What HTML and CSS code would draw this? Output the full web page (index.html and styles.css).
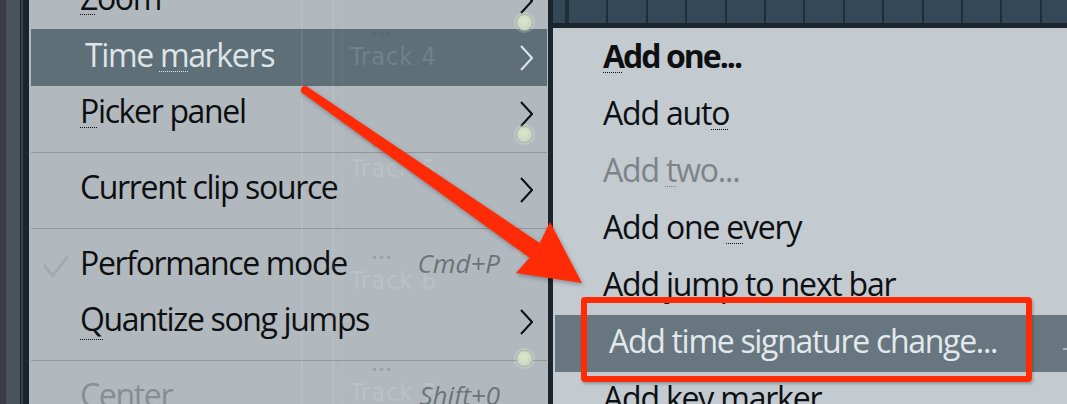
FILE: index.html
```html
<!DOCTYPE html>
<html lang="en">
<head>
    <meta charset="UTF-8">
    <meta name="viewport" content="width=device-width, initial-scale=1.0">
    <title>Time markers menu</title>
    <link rel="stylesheet" href="styles.css">
</head>
<body>
    <div class="screen">
        <div class="rail"></div>

        <div class="playlist">
            <!-- context menu -->
            <div class="menu">
                <div class="item">
                    <span class="check"></span>
                    <span class="label"><span class="acc">Z</span>oom</span>
                    <span class="sub"><svg class="chev" viewBox="0 0 13 26"><polyline points="1,1 12,13 1,25"/></svg></span>
                </div>
                <div class="item active">
                    <span class="check"></span>
                    <span class="label">Time <span class="acc">m</span>arkers</span>
                    <span class="sub"><svg class="chev" viewBox="0 0 13 26"><polyline points="1,1 12,13 1,25"/></svg></span>
                </div>
                <div class="item">
                    <span class="check"></span>
                    <span class="label"><span class="acc">P</span>icker panel</span>
                    <span class="sub"><svg class="chev" viewBox="0 0 13 26"><polyline points="1,1 12,13 1,25"/></svg></span>
                </div>
                <div class="sep"></div>
                <div class="item">
                    <span class="check"></span>
                    <span class="label">Current clip source</span>
                    <span class="sub"><svg class="chev" viewBox="0 0 13 26"><polyline points="1,1 12,13 1,25"/></svg></span>
                </div>
                <div class="sep"></div>
                <div class="item">
                    <span class="check"><svg class="tick" viewBox="0 0 26 25"><polyline points="1,11 9.5,22 25,2"/></svg></span>
                    <span class="label">Performance mode</span>
                    <span class="keys">Cmd+P</span>
                    <span class="sub"></span>
                </div>
                <div class="item">
                    <span class="check"></span>
                    <span class="label"><span class="acc acc-low">Q</span>uantize song jumps</span>
                    <span class="sub"><svg class="chev" viewBox="0 0 13 26"><polyline points="1,1 12,13 1,25"/></svg></span>
                </div>
                <div class="sep"></div>
                <div class="item disabled">
                    <span class="check"></span>
                    <span class="label">Center</span>
                    <span class="keys">Shift+0</span>
                    <span class="sub"></span>
                </div>
            </div>

            <!-- playlist track headers seen behind the menu -->
            <div class="tracks">
                <div class="track"><span class="led"></span><span class="grip"><i></i><i></i><i></i></span><span class="track-name">Track 3</span></div>
                <div class="track"><span class="led"></span><span class="grip"><i></i><i></i><i></i></span><span class="track-name">Track 4</span></div>
                <div class="track"><span class="led"></span><span class="grip"><i></i><i></i><i></i></span><span class="track-name">Track 5</span></div>
                <div class="track"><span class="led"></span><span class="grip"><i></i><i></i><i></i></span><span class="track-name">Track 6</span></div>
                <div class="track"><span class="led"></span><span class="grip"><i></i><i></i><i></i></span><span class="track-name">Track 7</span></div>
            </div>
        </div>

        <div class="split"></div>

        <div class="right">
            <div class="ruler"></div>
            <div class="submenu">
                <div class="opt bold"><span class="opt-label"><span class="acc">A</span>dd one...</span></div>
                <div class="opt"><span class="opt-label">Add aut<span class="acc">o</span></span></div>
                <div class="opt disabled"><span class="opt-label">Add <span class="acc">t</span>wo...</span></div>
                <div class="opt"><span class="opt-label">Add one <span class="acc">e</span>very</span></div>
                <div class="opt"><span class="opt-label">Add jump to next bar</span></div>
                <div class="opt active"><span class="opt-label">Add time signature change...</span><span class="more"></span></div>
                <div class="opt"><span class="opt-label">Add key marker</span></div>
            </div>
        </div>
    </div>

    <!-- annotation -->
    <svg class="callout-arrow" viewBox="0 0 1067 404">
        <circle cx="305" cy="90" r="4"/>
        <polygon points="307.3,86.7 539.7,243 550,222 582,283 516,273 529.5,257.8 302.7,93.3"/>
    </svg>
    <div class="callout-box"></div>
</body>
</html>
```

FILE: styles.css
```css
body {
    margin: 0;
    width: 1067px;
    height: 404px;
    overflow: hidden;
    position: relative;
    background-color: #b2b9be;
    font-family: 'Open Sans', 'Noto Sans', sans-serif;
    color: #0e0f10;
}

.screen {
    display: flex;
    height: 404px;
}

/* left window edge */
.rail {
    width: 29px;
    flex: none;
    background: linear-gradient(to right,
        #3a3b43 0 6px,
        #47525a 6px 20px,
        #152026 20px 21px,
        #3b4449 21px 23px,
        #1a252b 23px);
}

.playlist {
    width: 519px;
    flex: none;
    display: grid;
    overflow: hidden;
    background-color: #b2b9be;
}

.menu,
.tracks {
    grid-area: 1 / 1;
}

.menu {
    align-self: start;
    margin-top: -27px;
    padding: 0 1px 0 2px;
    font-size: 32px;
    letter-spacing: -1.35px;
}

.item {
    display: flex;
    align-items: flex-start;
    height: 56px;
    line-height: 50px;
    white-space: nowrap;
}

.item.active {
    height: 57px;
    line-height: 51px;
    background-color: #5f6f78;
    color: #dde5e9;
}

.item.active .label {
    padding-left: 5px;
}

.item.disabled {
    color: #868e93;
}

.check {
    width: 49px;
    flex: none;
    align-self: center;
    display: flex;
}

.tick {
    width: 26px;
    height: 25px;
    margin-left: 12px;
    fill: none;
    stroke: #a2aaaf;
    stroke-width: 3;
}

.label {
    flex: 1;
}

.keys {
    font-size: 26px;
    font-style: italic;
    letter-spacing: 0;
    color: #6b7479;
}

.sub {
    width: 47px;
    flex: none;
    align-self: center;
    height: 26px;
    padding-left: 20px;
    box-sizing: border-box;
}

.chev {
    display: block;
    width: 13px;
    height: 26px;
    fill: none;
    stroke: currentColor;
    stroke-width: 2;
}

.acc {
    text-decoration: underline dotted;
    text-decoration-thickness: 1px;
    text-underline-offset: 4px;
    text-decoration-skip-ink: none;
}

.acc-low {
    text-underline-offset: 8px;
}

.sep {
    height: 1px;
    margin: 10px 0 9px;
    background-color: #8f989d;
}

/* ghost track headers */
.tracks {
    margin-top: -98px;
    pointer-events: none;
    background: linear-gradient(to right,
        transparent 0 272px,
        rgba(255, 255, 255, 0.07) 272px 274px,
        transparent 274px 303px,
        rgba(255, 255, 255, 0.07) 303px 305px,
        transparent 305px 313px,
        rgba(255, 255, 255, 0.05) 313px 314px,
        transparent 314px);
}

.track {
    height: 112px;
    display: flex;
    flex-direction: column;
    padding-left: 321px;
}

.led {
    align-self: flex-end;
    margin-right: 15px;
    width: 15px;
    height: 15px;
    border-radius: 50%;
    background: radial-gradient(circle at 45% 40%, #dbe6d0, #c1d0b3);
    border: 1px solid #a8b4a0;
    box-shadow: 0 0 0 2px rgba(255, 255, 255, 0.18);
}

.grip {
    display: flex;
    gap: 4px;
    margin: 1px 0 0 23px;
}

.grip i {
    width: 3px;
    height: 3px;
    background-color: rgba(70, 82, 90, 0.22);
}

.track-name {
    margin-top: 9px;
    font-family: 'DejaVu Sans Condensed', 'DejaVu Sans', sans-serif;
    font-size: 25px;
    line-height: 25px;
    letter-spacing: 1px;
    color: rgba(255, 255, 255, 0.13);
}

.split {
    width: 5px;
    flex: none;
    background-color: #1b252b;
}

.right {
    flex: 1;
    display: flex;
    flex-direction: column;
    min-width: 0;
}

.ruler {
    height: 23px;
    flex: none;
    border-bottom: 5px solid #1a252c;
    background-color: #344857;
    background-image: repeating-linear-gradient(to right,
        #1f2e38 0 2px,
        transparent 2px 39.4px);
    background-position: 14px 0;
}

.submenu {
    flex: 1;
    padding: 2px 0 0 2px;
    background-color: #c3cad0;
    font-size: 32px;
    letter-spacing: -1.2px;
}

.opt {
    display: flex;
    align-items: flex-start;
    height: 57px;
    line-height: 51px;
    padding-left: 48px;
    white-space: nowrap;
}

.opt.bold {
    font-weight: 700;
    letter-spacing: -2px;
}

.opt.disabled {
    color: #7c8489;
}

.opt.active {
    padding-left: 54px;
    background-color: #67767f;
    color: #e3e9ec;
    letter-spacing: -1.3px;
}

.more {
    margin: 33px 0 0 auto;
    width: 4px;
    height: 2px;
    background-color: #aab4ba;
}

/* annotation overlay */
.callout-arrow {
    position: absolute;
    left: 0;
    top: 0;
    width: 1067px;
    height: 404px;
    fill: #ff2b06;
    pointer-events: none;
    filter: drop-shadow(1px 2px 2px rgba(0, 0, 0, 0.3));
}

.callout-box {
    position: absolute;
    left: 581px;
    top: 297px;
    width: 451px;
    height: 85px;
    box-sizing: border-box;
    border: 6px solid #ff2b06;
    border-radius: 4px;
    box-shadow: 1px 2px 3px rgba(0, 0, 0, 0.25);
}
```
